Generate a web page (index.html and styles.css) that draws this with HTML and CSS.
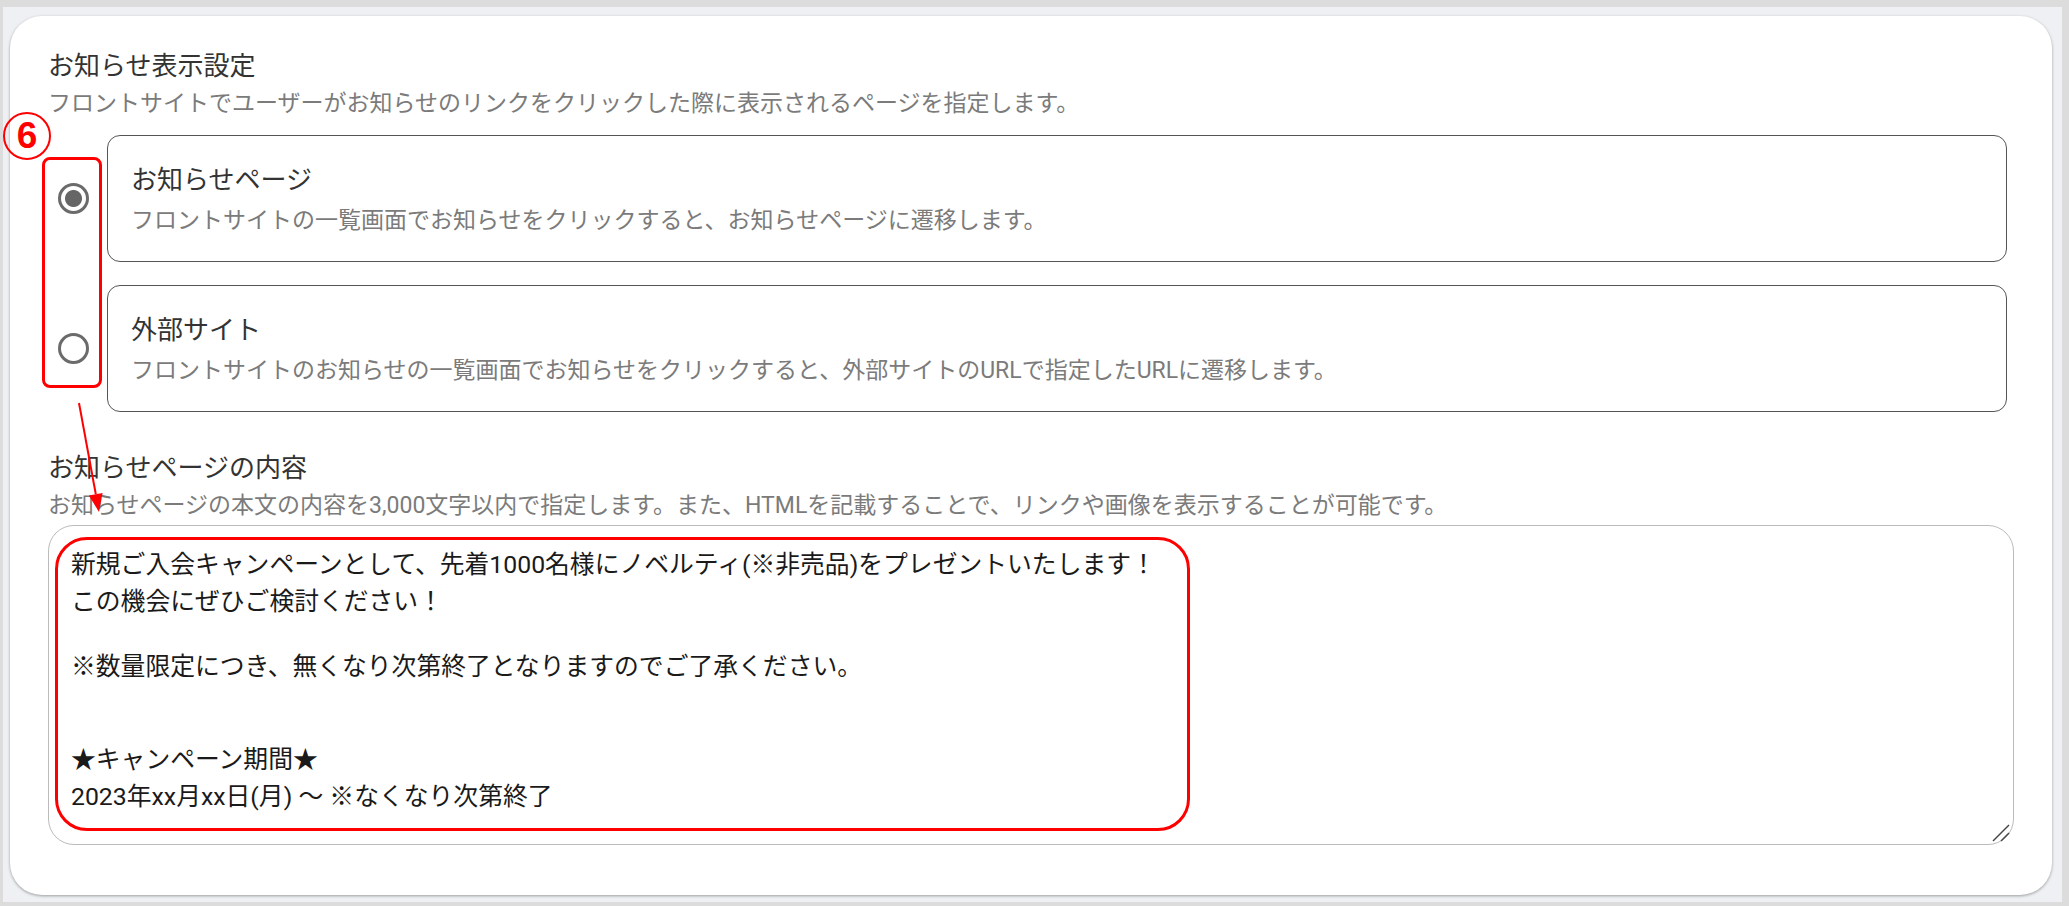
FILE: index.html
```html
<!DOCTYPE html>
<html lang="ja">

<head>
    <meta charset="UTF-8">
    <meta name="viewport" content="width=device-width, initial-scale=1.0">
    <title>お知らせ表示設定</title>
    <link rel="stylesheet" href="styles.css">
</head>

<body>
    <div class="frame">
        <div class="card">
            <!-- 表示設定 -->
            <h2 class="field-title">お知らせ表示設定</h2>
            <p class="field-desc">フロントサイトでユーザーがお知らせのリンクをクリックした際に表示されるページを指定します。</p>

            <div class="options">
                <label class="option">
                    <span class="radio checked"></span>
                    <span class="option-box">
                        <span class="option-title">お知らせページ</span>
                        <span class="option-desc">フロントサイトの一覧画面でお知らせをクリックすると、お知らせページに遷移します。</span>
                    </span>
                </label>
                <label class="option">
                    <span class="radio"></span>
                    <span class="option-box">
                        <span class="option-title">外部サイト</span>
                        <span class="option-desc">フロントサイトのお知らせの一覧画面でお知らせをクリックすると、外部サイトのURLで指定したURLに遷移します。</span>
                    </span>
                </label>
            </div>

            <!-- 本文 -->
            <h2 class="field-title second">お知らせページの内容</h2>
            <p class="field-desc">お知らせページの本文の内容を3,000文字以内で指定します。また、HTMLを記載することで、リンクや画像を表示することが可能です。</p>

            <div class="editor">
                <p class="line">新規ご入会キャンペーンとして、先着1000名様にノベルティ(※非売品)をプレゼントいたします！</p>
                <p class="line">この機会にぜひご検討ください！</p>
                <p class="blank"></p>
                <p class="line">※数量限定につき、無くなり次第終了となりますのでご了承ください。</p>
                <p class="blank"></p>
                <p class="blank"></p>
                <p class="line">★キャンペーン期間★</p>
                <p class="line">2023年xx月xx日(月) ～ ※なくなり次第終了</p>
                <svg class="resize" width="20" height="20" viewBox="0 0 20 20">
                    <line x1="2" y1="18" x2="18" y2="2" stroke="#444" stroke-width="1.5" />
                    <line x1="10" y1="18" x2="18" y2="10" stroke="#444" stroke-width="1.5" />
                </svg>
            </div>

            <!-- annotations -->
            <div class="mark-num">6</div>
            <div class="mark-box"></div>
            <svg class="mark-arrow" width="40" height="125" viewBox="0 0 40 125">
                <line x1="9" y1="7" x2="25.8" y2="98.3" stroke="#f00" stroke-width="2" />
                <polygon points="29,116 32.6,97 18.9,99.6" fill="#f00" />
            </svg>
            <div class="mark-text"></div>
        </div>
    </div>
</body>

</html>
```

FILE: styles.css
```css
* {
    box-sizing: border-box;
}

body {
    margin: 0;
    font-family: Roboto, "Noto Sans CJK JP", sans-serif;
    background: #eef0f3;
}

.frame {
    height: 906px;
    border-style: solid;
    border-color: #dcdcdc;
    border-width: 7px 7px 4px 3px;
    background: #eef0f3;
    padding: 9px 10px 7px 7px;
}

.card {
    position: relative;
    background: #fff;
    border-radius: 32px;
    box-shadow: 0 1px 3px rgba(0, 0, 0, 0.35);
    padding: 33px 38px 50px 38px;
}

.field-title {
    margin: 0 0 6px;
    font-size: 26px;
    line-height: 34px;
    font-weight: 400;
    color: #333;
}

.field-title.second {
    margin-top: 39px;
}

.field-desc {
    margin: 0;
    font-size: 23px;
    line-height: 30px;
    color: #7b7b7b;
}

.options {
    display: flex;
    flex-direction: column;
    gap: 23px;
    margin: 16px 7px 0 0;
}

.option {
    display: flex;
    align-items: center;
}

.radio {
    width: 59px;
    flex-shrink: 0;
    display: flex;
    justify-content: center;
    align-items: center;
    padding-right: 9px;
}

.radio::before {
    content: "";
    width: 31px;
    height: 31px;
    border: 3px solid #6b6b6b;
    border-radius: 50%;
    box-sizing: border-box;
}

.radio.checked::before {
    background: radial-gradient(circle, #666 0 8px, transparent 9px);
}

.option-box {
    flex: 1;
    display: flex;
    flex-direction: column;
    gap: 9px;
    border: 1px solid #555;
    border-radius: 13px;
    padding: 27px 23px 25px;
}

.option-title {
    font-size: 26px;
    line-height: 34px;
    color: #333;
}

.option-desc {
    font-size: 23px;
    line-height: 30px;
    color: #7b7b7b;
}

.editor {
    position: relative;
    margin-top: 4px;
    height: 320px;
    border: 1px solid #bbb;
    border-radius: 26px;
    padding: 20px 22px;
    color: #1a1a1a;
    font-size: 24.8px;
}

.editor p {
    margin: 0;
}

.line {
    line-height: 37px;
    white-space: nowrap;
}

.blank {
    height: 28px;
}

.resize {
    position: absolute;
    right: 2px;
    bottom: 1px;
}

/* red annotations */
.mark-num {
    position: absolute;
    left: -7px;
    top: 96px;
    width: 48px;
    height: 48px;
    border: 2px solid #f00;
    border-radius: 50%;
    color: #f00;
    font-family: "Liberation Sans", Arial, sans-serif;
    font-weight: 700;
    font-size: 37px;
    line-height: 44px;
    text-align: center;
}

.mark-box {
    position: absolute;
    left: 32px;
    top: 141px;
    width: 60px;
    height: 231px;
    border: 3px solid #f00;
    border-radius: 8px;
}

.mark-arrow {
    position: absolute;
    left: 60px;
    top: 380px;
}

.mark-text {
    position: absolute;
    left: 45px;
    top: 521px;
    width: 1135px;
    height: 294px;
    border: 3px solid #f00;
    border-radius: 32px;
}
```
